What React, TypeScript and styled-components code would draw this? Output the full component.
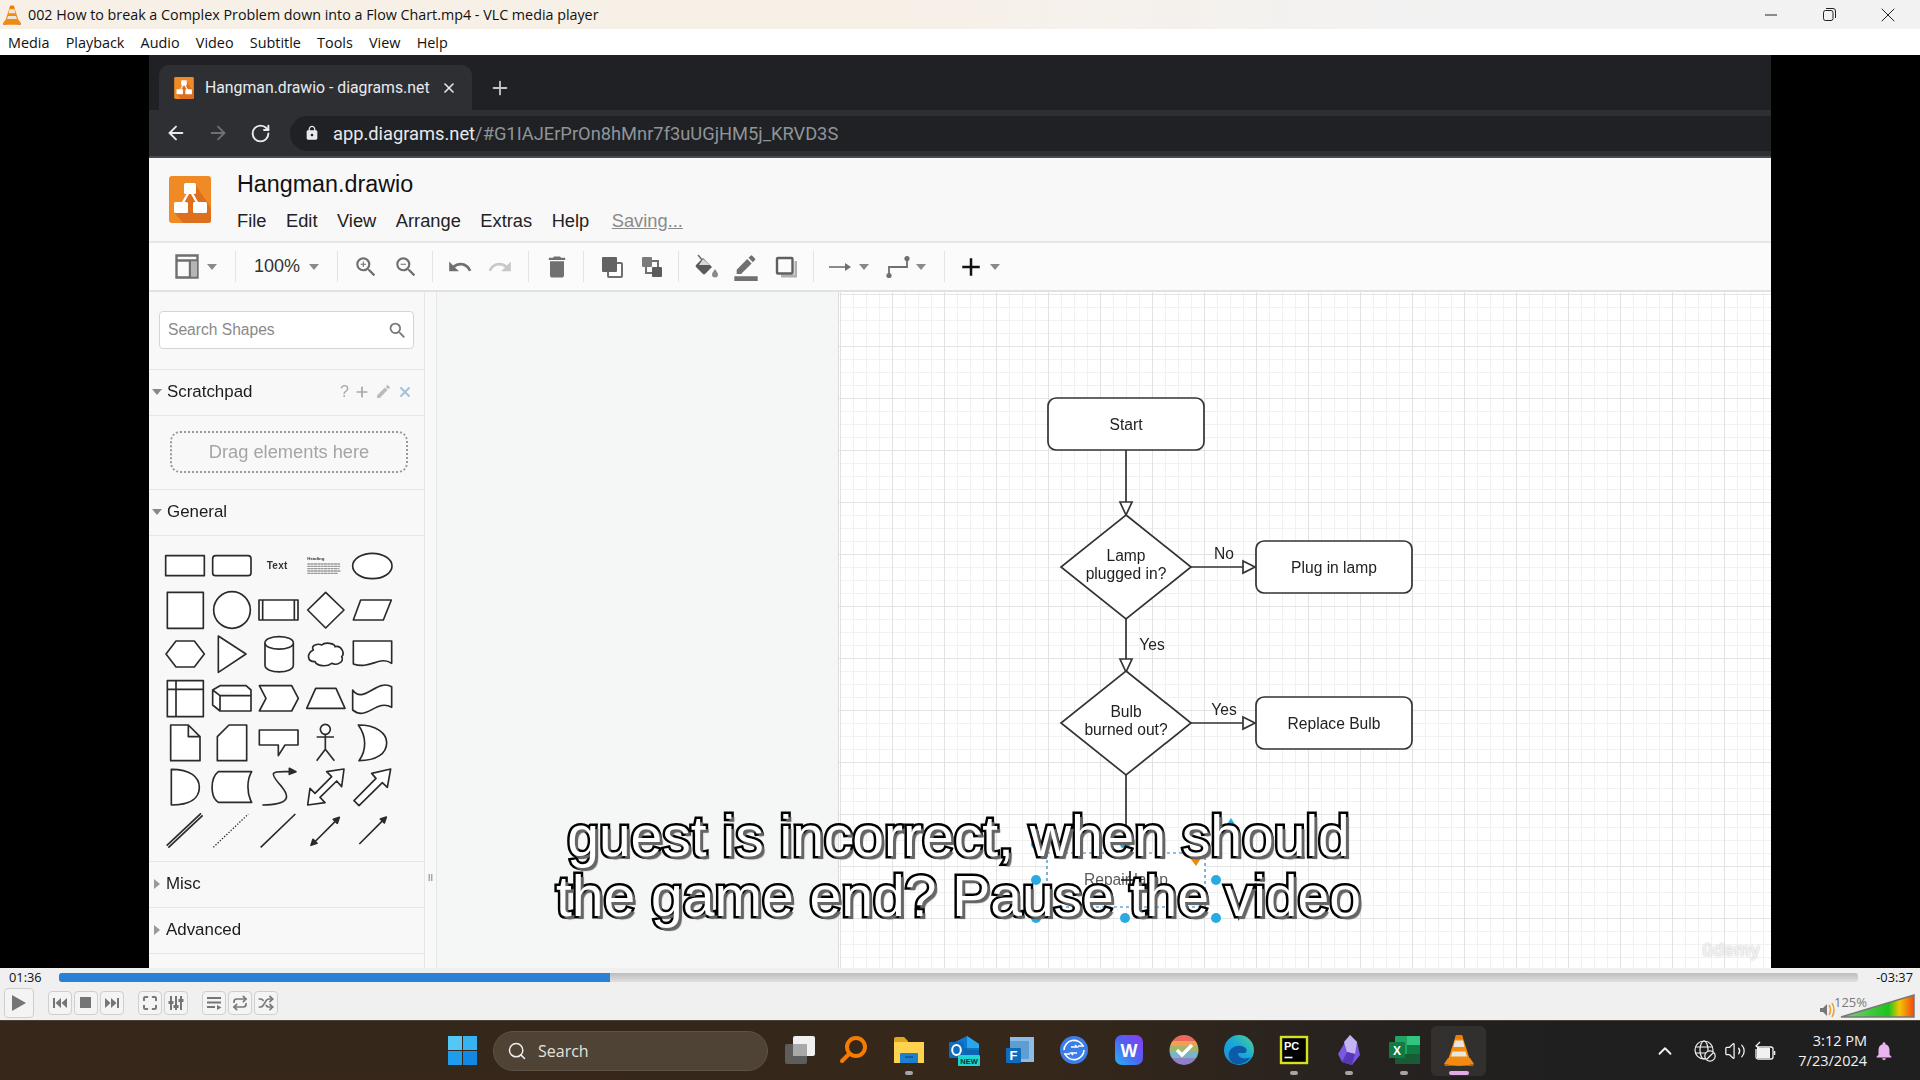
import React from "react";
import styled, { createGlobalStyle } from "styled-components";
import {
  ArrowLeft,
  ArrowRight,
  ChevronUp,
  Maximize,
  Plus,
  Repeat,
  RotateCw,
  Search,
  Shuffle,
  Volume2,
  X,
} from "lucide-react";
import {
  MdAdd,
  MdBorderColor,
  MdDelete,
  MdEdit,
  MdLock,
  MdNotifications,
  MdRedo,
  MdSearch,
  MdUndo,
  MdZoomIn,
  MdZoomOut,
} from "react-icons/md";

const GlobalStyle = createGlobalStyle`
  html, body {
    margin: 0;
    width: 1920px;
    height: 1080px;
    overflow: hidden;
    background: #000;
  }
  * { box-sizing: border-box; }
`;

const UI_FONT = `"Open Sans", "Noto Sans", sans-serif`;
const HELV = `"Liberation Sans", Arial, sans-serif`;

const Screen = styled.div`
  width: 1920px;
  height: 1080px;
  display: flex;
  flex-direction: column;
  font-family: ${UI_FONT};
`;

/* vlc window chrome */
const TitleBar = styled.div`
  height: 29px;
  display: flex;
  align-items: center;
  padding: 0 3px 0 1px;
  background: linear-gradient(90deg, #f8f0e6 0%, #f7f0e7 45%, #f2f2f2 75%);
`;
const TitleText = styled.span`
  margin-left: 5px;
  font-size: 14.3px;
  color: #111;
  white-space: nowrap;
`;
const WindowButtons = styled.div`
  margin-left: auto;
  display: flex;
`;
const WindowButton = styled.div`
  width: 58.5px;
  height: 29px;
  display: flex;
  align-items: center;
  justify-content: center;
`;
const MenuBar = styled.div`
  height: 26px;
  display: flex;
  align-items: center;
  gap: 16.2px;
  padding-left: 8px;
  background: #fff;
  font-size: 14.4px;
  color: #111;
`;

const Player = styled.div`
  height: 913px;
  background: #000;
  display: flex;
  justify-content: center;
  position: relative;
`;
const VideoFrame = styled.div`
  width: 1622px;
  height: 913px;
  display: flex;
  flex-direction: column;
  filter: blur(0.55px);
  overflow: hidden;
`;

/* browser inside the video */
const TabStrip = styled.div`
  height: 55px;
  padding: 10px 0 0 10px;
  background: #202124;
  display: flex;
  align-items: flex-end;
  color: #e8eaed;
  font-family: Roboto, sans-serif;
`;
const Tab = styled.div`
  width: 313px;
  height: 45px;
  background: #2e2f33;
  border-radius: 10px 10px 0 0;
  display: flex;
  align-items: center;
  padding-left: 14px;
  font-size: 15.8px;
`;
const TabTitle = styled.span`
  margin-left: 10px;
  width: 236px;
  white-space: nowrap;
`;
const NewTab = styled.div`
  margin-left: 17px;
  height: 45px;
  display: flex;
  align-items: center;
`;
const AddressBar = styled.div`
  height: 48px;
  background: #2e2f33;
  border-bottom: 2px solid #4a4b4e;
  display: flex;
  align-items: center;
  padding-left: 11px;
`;
const NavButton = styled.div`
  width: 42px;
  margin-left: ${(p: { $first?: boolean }) => (p.$first ? "-5px" : "0")};
  display: flex;
  justify-content: center;
`;
const Omnibox = styled.div`
  flex: 1;
  margin-left: 9px;
  height: 35px;
  background: #202124;
  border-radius: 18px 0 0 18px;
  display: flex;
  align-items: center;
  padding-left: 14px;
  font-family: Roboto, sans-serif;
  font-size: 18.3px;
  color: #e8eaed;
`;
const UrlHash = styled.span`
  color: #8f9499;
`;
const UrlText = styled.span`
  margin-left: 13px;
`;

/* draw.io */
const AppHeader = styled.div`
  height: 85px;
  background: #f8f8f8;
  border-bottom: 2px solid #e6e6e6;
  display: flex;
  padding: 13px 0 0 20px;
  font-family: ${HELV};
`;
const LogoWrap = styled.div`
  margin-top: 5px;
`;
const HeaderText = styled.div`
  margin-left: 26px;
  display: flex;
  flex-direction: column;
`;
const DocTitle = styled.div`
  font-size: 23.3px;
  line-height: 26px;
  color: #111;
`;
const DocMenu = styled.div`
  margin-top: 13px;
  display: flex;
  gap: 19.5px;
  font-size: 18.3px;
  line-height: 22px;
  color: #222;
`;
const Saving = styled.span`
  color: #8a8a8a;
  text-decoration: underline;
  margin-left: 3px;
`;
const Toolbar = styled.div`
  height: 49px;
  background: #fbfbfb;
  border-bottom: 2px solid #e2e2e2;
  display: flex;
  align-items: center;
  padding-left: 26px;
  font-family: ${HELV};
`;
const Slot = styled.div<{ $w: number; $ml?: number }>`
  width: ${(p) => p.$w}px;
  margin-left: ${(p) => p.$ml ?? 0}px;
  flex: none;
  display: flex;
  align-items: center;
  justify-content: center;
  color: #707070;
`;
const ZoomValue = styled.span`
  padding-left: 4px;
  font-size: 18px;
  color: #333;
`;
const Sep = styled.div`
  width: 1px;
  height: 31px;
  background: #e4e4e4;
`;
const Caret = styled.span`
  width: 0;
  height: 0;
  border-left: 5px solid transparent;
  border-right: 5px solid transparent;
  border-top: 6px solid #8a8a8a;
`;

const Workspace = styled.div`
  flex: 1;
  min-height: 0;
  display: flex;
  font-family: ${HELV};
`;
const Sidebar = styled.div`
  width: 276px;
  background: #f8f8f8;
  border-right: 1px solid #e6e6e6;
  display: flex;
  flex-direction: column;
`;
const SearchRow = styled.div`
  height: 78px;
  padding: 19px 10px 0 10px;
  border-bottom: 1px solid #e6e6e6;
`;
const SearchBox = styled.div`
  height: 38px;
  background: #fff;
  border: 1px solid #d5d5d5;
  border-radius: 4px;
  display: flex;
  align-items: center;
  justify-content: space-between;
  padding: 0 5px 0 8px;
  font-size: 15.6px;
  color: #8a8a8a;
`;
const SectionHead = styled.div`
  height: 46px;
  border-bottom: 1px solid #e6e6e6;
  display: flex;
  align-items: center;
  padding: 0 0 2px 3px;
  font-size: 16.9px;
  color: #1c1c1c;
`;
const Chevron = styled.span<{ $open?: boolean }>`
  width: 0;
  height: 0;
  margin-right: 5px;
  ${(p) =>
    p.$open
      ? `border-left: 5px solid transparent; border-right: 5px solid transparent; border-top: 6px solid #888; `
      : `margin-left: 2px; margin-right: 6px; border-top: 5px solid transparent; border-bottom: 5px solid transparent; border-left: 6px solid #999;`}
`;
const HeadActions = styled.div`
  margin-left: auto;
  margin-right: 11px;
  display: flex;
  align-items: center;
  gap: 5px;
  color: #a8a8a8;
  font-size: 16px;
`;
const DropRow = styled.div`
  height: 74px;
  padding: 15px 16px 0 21px;
  border-bottom: 1px solid #e6e6e6;
`;
const DropZone = styled.div`
  height: 42px;
  border: 2.5px dotted #999;
  border-radius: 10px;
  display: flex;
  align-items: center;
  justify-content: center;
  font-size: 18.3px;
  color: #a5a5a5;
`;
const Palette = styled.svg`
  display: block;
  margin: 10px 0 5px 1px;
`;
const PaletteRule = styled.div`
  border-top: 1px solid #e6e6e6;
`;
const Splitter = styled.div`
  width: 12px;
  background: #f8f8f8;
  border-right: 1px solid #e6e6e6;
  display: flex;
  align-items: center;
  justify-content: center;
  padding-top: 495px;
  color: #9a9a9a;
  font-size: 9px;
  font-weight: 700;
`;
const CanvasGutter = styled.div`
  width: 401px;
  background: #f5f6f6;
`;
const Page = styled.div`
  flex: 1;
  position: relative;
  border-left: 1px solid #dcdcdc;
  background-color: #fff;
  background-image: linear-gradient(#e4e4e4 1px, transparent 1px),
    linear-gradient(90deg, #e2e2e2 1px, transparent 1px),
    linear-gradient(#f1f1f1 1px, transparent 1px),
    linear-gradient(90deg, #f1f1f1 1px, transparent 1px);
  background-size: 52px 52px, 52px 52px, 13px 13px, 13px 13px;
  background-position: 0 2px, 1px 0, 0 2px, 1px 0;
`;
const FlowChart = styled.svg`
  position: absolute;
  left: -1px;
  top: -2px;
`;
const Watermark = styled.div`
  position: absolute;
  right: 11px;
  bottom: 7px;
  font-size: 18px;
  font-weight: 700;
  color: #f0f0f0;
  text-shadow: 0 0 2px #bbb;
`;

const Subtitles = styled.div`
  position: absolute;
  left: 0;
  right: 3px;
  bottom: 42px;
  text-align: center;
  font-family: ${HELV};
  font-size: 57px;
  line-height: 60px;
  color: #fff;
  white-space: nowrap;
  -webkit-text-stroke: 5px #000;
  paint-order: stroke fill;
  text-shadow: 3px 3px 1px #666;
`;

/* vlc controls */
const Controls = styled.div`
  height: 52px;
  background: #f0f0f0;
  display: flex;
  flex-direction: column;
`;
const SeekRow = styled.div`
  height: 20px;
  display: flex;
  align-items: center;
  padding: 0 7px 2px 9px;
  font-size: 12.8px;
  color: #111;
`;
const TimeLabel = styled.span`
  width: 50px;
`;
const SeekTrack = styled.div`
  width: 1799px;
  height: 9px;
  margin-right: auto;
  background: linear-gradient(#bdbdbd, #dfdfdf);
  border-radius: 3px;
  overflow: hidden;
`;
const SeekFill = styled.div`
  height: 100%;
  background: #2a7fd6;
`;
const ButtonRow = styled.div`
  flex: 1;
  display: flex;
  align-items: flex-start;
  padding-left: 4px;
  position: relative;
`;
const CtlButton = styled.div<{ $big?: boolean; $ml?: number }>`
  width: ${(p) => (p.$big ? 30 : 24)}px;
  height: ${(p) => (p.$big ? 30 : 24)}px;
  margin-top: ${(p) => (p.$big ? 0 : 3)}px;
  margin-left: ${(p) => p.$ml ?? 2}px;
  background: #f4f4f4;
  border: 1px solid #cfcfcf;
  border-radius: 4px;
  display: flex;
  align-items: center;
  justify-content: center;
  color: #777;
`;
const VolumeBox = styled.div`
  position: absolute;
  right: 5px;
  top: 2px;
  width: 95px;
  height: 30px;
`;
const VolumeLabel = styled.span`
  position: absolute;
  left: 14px;
  top: 3px;
  font-size: 13px;
  color: #7a7a7a;
`;

/* windows taskbar */
const Taskbar = styled.div`
  height: 60px;
  background: linear-gradient(90deg, #36271a 0%, #35271a 55%, #262220 72%, #1f1f1f 82%);
  border-top: 1px solid #4a4238;
  display: flex;
  align-items: center;
  padding: 0 25px 0 448px;
  color: #fff;
`;
const TaskSearch = styled.div`
  width: 275px;
  height: 40px;
  margin-left: 16px;
  background: #4e4335;
  border: 1px solid #5d5244;
  border-radius: 20px;
  display: flex;
  align-items: center;
  gap: 11px;
  padding-left: 13px;
  font-size: 16px;
  color: #e6e2dc;
`;
const TaskIcons = styled.div`
  margin-left: 3px;
  display: flex;
`;
const TaskSlot = styled.div<{ $active?: boolean }>`
  width: 55px;
  height: 50px;
  padding-bottom: 2px;
  position: relative;
  display: flex;
  align-items: center;
  justify-content: center;
  border-radius: 6px;
  background: ${(p) => (p.$active ? "rgba(255,255,255,0.07)" : "transparent")};
`;
const RunDot = styled.span<{ $active?: boolean }>`
  position: absolute;
  bottom: 1px;
  left: 50%;
  transform: translateX(-50%);
  width: ${(p) => (p.$active ? 20 : 8)}px;
  height: 4px;
  border-radius: 2px;
  background: ${(p) => (p.$active ? "#e3a9e8" : "#a5a5a5")};
`;
const Tray = styled.div`
  margin-left: auto;
  display: flex;
  align-items: center;
  color: #f2f2f2;
`;
const TraySlot = styled.div<{ $w: number }>`
  width: ${(p) => p.$w}px;
  display: flex;
  justify-content: center;
`;
const Clock = styled.div`
  margin-left: 6px;
  width: 81px;
  text-align: right;
  font-size: 14.5px;
  line-height: 20px;
`;
const BellWrap = styled.div`
  margin-left: 6px;
  width: 22px;
  display: flex;
  justify-content: center;
  color: #eab4ef;
`;

const VlcCone = ({ size }: { size: number }) => (
  <svg width={size} height={size} viewBox="0 0 36 36">
    <path d="M15 3h6l8 25H7z" fill="#f58a0b" />
    <path d="M14 8.5h8l1.5 6.5h-11zM11.5 19.5h13l1.5 5H10z" fill="#e8e6e0" />
    <path d="M15 3h6l1 4h-8z" fill="#ef7d00" />
    <path d="M7 26h22l4 6q-15 4-30 0z" fill="#f28a12" />
    <path d="M3 32q15 4 30 0l-1 2H4z" fill="#c96405" />
  </svg>
);

const DrawioLogo = ({ w, h }: { w: number; h: number }) => (
  <svg width={w} height={h} viewBox="0 0 42 47">
    <rect width="42" height="47" rx="3" fill="#f08a24" />
    <path d="M26 8 42 32v12a3 3 0 0 1-3 3H14L5 36z" fill="#dd6f1f" />
    <path d="M21 14 12 30M21 14l9 16" stroke="#fff" strokeWidth="2.4" />
    <rect x="15" y="7" width="12" height="11" rx="1.5" fill="#fff" />
    <rect x="5" y="26" width="14" height="11" rx="1.5" fill="#fff" />
    <rect x="24" y="26" width="14" height="11" rx="1.5" fill="#fff" />
  </svg>
);

const G = "#6f6f6f";
const LayoutIcon = () => (
  <svg width="24" height="25" viewBox="0 0 24 25">
    <path d="M1.5 1.5h21v22h-21zM1.5 6.5h21M15 6.5v17" fill="none" stroke={G} strokeWidth="2.4" />
    <rect x="16" y="7.5" width="6" height="15" fill="#b5b5b5" />
  </svg>
);
const ToFrontTool = () => (
  <svg width="24" height="24" viewBox="0 0 24 24">
    <rect x="8" y="8" width="14" height="14" rx="1" fill="#fff" stroke={G} strokeWidth="2" />
    <rect x="2" y="2" width="15" height="15" rx="1" fill="#636363" />
  </svg>
);
const ToBackTool = () => (
  <svg width="24" height="24" viewBox="0 0 24 24">
    <rect x="6" y="6" width="12" height="12" fill="none" stroke={G} strokeWidth="2" />
    <rect x="2" y="2" width="10" height="10" rx="1" fill="#7a7a7a" />
    <rect x="12" y="12" width="10" height="10" rx="1" fill="#5c5c5c" />
  </svg>
);
const FillTool = () => (
  <svg width="26" height="26" viewBox="0 0 26 26">
    <path d="M5 1l5 6" stroke={G} strokeWidth="1.6" />
    <path d="M10 4l9 9-7 7a1.5 1.5 0 0 1-2 0l-7-7a1.5 1.5 0 0 1 0-2z" fill="#5a5a5a" />
    <path d="M6 11h11l-7-6z" fill="#d8d8d8" />
    <path d="M22 15c-2 3-3 4-3 5.5a3 3 0 0 0 6 0c0-1.5-1-2.5-3-5.5z" fill="#8a8a8a" />
  </svg>
);
const ArrowTool = () => (
  <svg width="24" height="12" viewBox="0 0 24 12">
    <path d="M1 6h17" stroke={G} strokeWidth="1.6" />
    <path d="M17 2l6 4-6 4z" fill={G} />
  </svg>
);
const WaypointTool = () => (
  <svg width="24" height="24" viewBox="0 0 24 24">
    <path d="M3 21v-9h18V3" fill="none" stroke={G} strokeWidth="1.8" />
    <circle cx="3" cy="20.5" r="2.6" fill={G} />
    <circle cx="21" cy="3.5" r="2.6" fill={G} />
  </svg>
);
const ShadowTool = () => (
  <svg width="22" height="22" viewBox="0 0 22 22">
    <path d="M6 20h15V5" fill="none" stroke="#b0b0b0" strokeWidth="3" />
    <rect x="2" y="2" width="15.5" height="15.5" rx="1" fill="none" stroke="#5f5f5f" strokeWidth="2.4" />
  </svg>
);

const PlayIcon = () => (
  <svg width="16" height="18" viewBox="0 0 16 18">
    <path d="M1 1v16l14-8z" fill="#757575" />
  </svg>
);
const TransportIcon = ({ kind }: { kind: "prev" | "next" | "stop" | "list" | "eq" }) => {
  if (kind === "stop") {
    return (
      <svg width="12" height="12" viewBox="0 0 12 12">
        <rect width="11" height="11" fill="#757575" />
      </svg>
    );
  }
  if (kind === "list") {
    return (
      <svg width="16" height="16" viewBox="0 0 16 16">
        <path d="M1 3h14M1 7.5h14M1 12h8" stroke="#757575" strokeWidth="2" />
        <path d="M11 10l4.5 2.5L11 15z" fill="#757575" />
      </svg>
    );
  }
  if (kind === "eq") {
    return (
      <svg width="16" height="16" viewBox="0 0 16 16">
        <path d="M3 1v14M8 1v14M13 1v14" stroke="#757575" strokeWidth="2" />
        <path d="M.5 6h5v3h-5zM5.5 10h5v3h-5zM10.5 4h5v3h-5z" fill="#757575" />
      </svg>
    );
  }
  const d =
    kind === "prev"
      ? "M1 3h2v10H1zM9 3v10L3.5 8zM15 3v10L9.5 8z"
      : "M15 3h-2v10h2zM7 3v10l5.5-5zM1 3v10l5.5-5z";
  return (
    <svg width="16" height="16" viewBox="0 0 16 16">
      <path d={d} fill="#757575" />
    </svg>
  );
};

const ShapePalette = () => (
  <Palette width="274" height="310" viewBox="0 -132 822 930">
    <g fill="#fff" stroke="#2b2b2b" strokeWidth="5" strokeLinejoin="round">
      <rect x="47" y="-103" width="116" height="60" />
      <rect x="188" y="-103" width="115" height="60" rx="9" />
      <ellipse cx="667" cy="-72" rx="59" ry="38" />

      <rect x="52" y="7" width="108" height="108" />
      <circle cx="246" cy="60" r="55" />
      <path d="M327 30h117v60H327zM338 30v60M433 30v60" />
      <path d="M473 60l54-53 55 53-55 54z" />
      <path d="M610 90l22-60h92l-24 60z" />

      <path d="M48 192l30-39h55l30 39-30 39H78z" />
      <path d="M205 138l83 54-83 55z" />
      <path d="M345 158c0-24 85-24 85 0v68c0 26-85 26-85 0z" />
      <path d="M345 158c0 26 85 26 85 0" />
      <path d="M490 180c-10-15 15-20 25-15 10-10 40-5 40 5 20-5 30 20 20 30 10 15-15 28-30 20-15 12-45 8-50-5-25 0-25-25-5-35z" />
      <path d="M610 153h115v67c-35-25-65 20-115 2z" />

      <path d="M52 272h108v108H52zM78 272v108M52 298h108" />
      <path d="M188 300l22 -13h78l15 13v63H210l-22-18zM188 300l22 17h93M210 317v46" />
      <path d="M328 287h97l20 38-20 38h-97l20-38z" />
      <path d="M470 355l27-60h61l27 60z" />
      <path d="M608 300c32 45 72-35 117-10v62c-45-27-75 43-117 8z" />

      <path d="M62 405h53l35 35v72H62zM115 405v35h35" />
      <path d="M202 440l35-35h53v107h-88z" />
      <path d="M328 420h116v45h-39l-20 32v-32h-57z" />
      <circle cx="526" cy="418" r="15" />
      <path d="M526 433v45M500 441h52M526 478l-26 34M526 478l27 34" fill="none" />
      <path d="M625 405c55 0 85 25 85 53 0 32-30 54-83 54 23-32 23-72-2-107z" />

      <path d="M64 538c56 0 84 22 84 54 0 33-28 53-84 53z" />
      <path d="M205 545h100c-15 25-15 65 0 92H205c-25-17-25-72 0-92z" />
      <path d="M337 645c83 0 83-25 58-55-45-50-25-45 25-45" fill="none" />
      <path d="M418 535l20 10-20 8z" fill="#2b2b2b" />
      <path d="M473 645l7-50 15 15 50-50-15-15 52-8-7 53-15-17-50 49 15 16z" />
      <path d="M612 632l66-67-13-15 57-13-10 55-15-14-70 69z" />

      <g fill="none">
        <path d="M50 767l103-97M55 773l103-97" />
        <path d="M190 772l105-100" strokeDasharray="4 5" strokeWidth="4" />
        <path d="M332 772l104-100" />
        <path d="M488 762l76-76M628 762l76-76" />
      </g>
      <path d="M483 766l6-18 12 12zM568 682l-6 18-12-12zM709 681l-6 18-12-12z" fill="#2b2b2b" />
    </g>
    <text x="350" y="-62" fontSize="30" fontWeight="700" fill="#333" fontFamily={HELV} textLength="62">
      Text
    </text>
    <text x="472" y="-90" fontSize="13" fontWeight="700" fill="#333" fontFamily={HELV}>
      Heading
    </text>
    <path d="M472-78h98M472-71h100M472-64h96M472-57h100M472-50h92" stroke="#999" strokeWidth="4" strokeDasharray="9 1" />
  </Palette>
);

const FlowText = styled.text`
  font-family: ${HELV};
  font-size: 15.6px;
  fill: #222;
  text-anchor: middle;
`;

/* coordinates here are the ones on screen, the viewBox shifts them into the page */
const Flow = () => (
  <FlowChart width="933" height="678" viewBox="838 290 933 678">
    <g fill="#fff" stroke="#333" strokeWidth="1.7">
      <path d="M1126 450v53M1126 619v53M1126 775v78" fill="none" />
      <path d="M1191 567h52M1191 723h52" fill="none" />
      <path d="M1120 502h12l-6 13z" />
      <path d="M1120 659h12l-6 13z" />
      <path d="M1243 561l12 6-12 6z" />
      <path d="M1243 717l12 6-12 6z" />
      <rect x="1048" y="398" width="156" height="52" rx="8" />
      <rect x="1256" y="541" width="156" height="52" rx="8" />
      <rect x="1256" y="697" width="156" height="52" rx="8" />
      <path d="M1126 515l65 52-65 52-65-52z" />
      <path d="M1126 671l65 52-65 52-65-52z" />
    </g>
    <FlowText x="1126" y="430">Start</FlowText>
    <FlowText x="1126" y="561">Lamp</FlowText>
    <FlowText x="1126" y="579">plugged in?</FlowText>
    <FlowText x="1334" y="573">Plug in lamp</FlowText>
    <FlowText x="1224" y="559">No</FlowText>
    <FlowText x="1152" y="650">Yes</FlowText>
    <FlowText x="1126" y="717">Bulb</FlowText>
    <FlowText x="1126" y="735">burned out?</FlowText>
    <FlowText x="1224" y="715">Yes</FlowText>
    <FlowText x="1334" y="729">Replace Bulb</FlowText>

    <rect x="1047" y="853" width="158" height="54" fill="#fff" stroke="#2b7fc4" strokeWidth="1.2" strokeDasharray="3 3" />
    <FlowText x="1126" y="885" opacity="0.75">Repair lamp</FlowText>
    <path d="M1130 871v18M1121 880h18" stroke="#111" strokeWidth="1.6" />
    <g fill="#29abe2">
      <circle cx="1036" cy="880" r="5" />
      <circle cx="1216" cy="880" r="5" />
      <circle cx="1036" cy="918" r="5" />
      <circle cx="1125" cy="918" r="5" />
      <circle cx="1216" cy="918" r="5" />
      <circle cx="1036" cy="844" r="5" />
      <circle cx="1216" cy="844" r="5" />
      <circle cx="1125" cy="844" r="5" />
      <path d="M1226 826l5-8 5 8z" />
    </g>
    <path d="M1190 858h11l-5 8z" fill="#f08705" />
  </FlowChart>
);

const TaskView = () => (
  <svg width="36" height="36" viewBox="0 0 36 36">
    <rect x="4" y="12" width="22" height="20" rx="2" fill="#5d5d5d" />
    <rect x="12" y="4" width="22" height="20" rx="2" fill="#f0f0f0" />
    <rect x="12" y="12" width="14" height="12" fill="#a8a8a8" />
  </svg>
);
const OrangeSearch = () => (
  <svg width="36" height="36" viewBox="0 0 36 36">
    <circle cx="20" cy="15" r="9" fill="none" stroke="#f57c00" strokeWidth="4" />
    <path d="M13 22l-7 7" stroke="#f57c00" strokeWidth="4" strokeLinecap="round" />
  </svg>
);
const FolderIcon = () => (
  <svg width="36" height="36" viewBox="0 0 36 36">
    <path d="M3 7a2 2 0 0 1 2-2h8l4 4v6H3z" fill="#e2a61e" />
    <path d="M3 10h30v21H3z" fill="#ffd24f" />
    <path d="M9 22a1 1 0 0 1 1-1h16a1 1 0 0 1 1 1v9H9z" fill="#1c7fcf" />
    <path d="M14 25h8" stroke="#0c4f8c" strokeWidth="1.4" />
  </svg>
);
const OutlookIcon = () => (
  <svg width="36" height="36" viewBox="0 0 36 36">
    <path d="M9 10l12-6 12 8v14H9z" fill="#0f78d4" />
    <path d="M21 4l12 8v6H21z" fill="#28a8ea" />
    <path d="M9 16h24v10H9z" fill="#0a5ea8" opacity="0.7" />
    <rect x="3" y="10" width="15" height="16" rx="1" fill="#0f6cbd" />
    <ellipse cx="10.5" cy="18" rx="4.3" ry="5" fill="none" stroke="#fff" strokeWidth="2" />
    <rect x="12" y="23" width="22" height="11" rx="1" fill="#1fd6d3" />
    <text x="23" y="31.5" fontSize="7.5" fontWeight="700" textAnchor="middle" fontFamily={HELV} fill="#06323a">
      NEW
    </text>
  </svg>
);
const FormsIcon = () => (
  <svg width="36" height="36" viewBox="0 0 36 36">
    <rect x="9" y="5" width="24" height="25" fill="#8dbde4" />
    <rect x="9" y="9" width="19" height="18" fill="#5f9ed2" />
    <rect x="5" y="16" width="15" height="15" rx="1" fill="#0f6cbd" />
    <text x="12.5" y="28" fontSize="13" fontWeight="700" textAnchor="middle" fontFamily={HELV} fill="#fff">
      F
    </text>
  </svg>
);
const SyncIcon = () => (
  <svg width="36" height="36" viewBox="0 0 36 36">
    <circle cx="18" cy="18" r="14" fill="#3d7de8" />
    <path d="M8 18a10 10 0 0 1 19-4M28 18a10 10 0 0 1-19 4" fill="none" stroke="#fff" strokeWidth="1.6" />
    <path d="M22 14h6M14 22H8M15 15h6l-2-2M21 21h-6l2 2" fill="none" stroke="#fff" strokeWidth="1.6" />
  </svg>
);
const WebflowIcon = () => (
  <svg width="36" height="36" viewBox="0 0 36 36">
    <defs>
      <linearGradient id="wf" x1="0" y1="1" x2="1" y2="0">
        <stop offset="0" stopColor="#22b5f5" />
        <stop offset="0.5" stopColor="#4f63f2" />
        <stop offset="1" stopColor="#8b3bf0" />
      </linearGradient>
    </defs>
    <rect x="4" y="3" width="28" height="30" rx="7" fill="url(#wf)" />
    <text x="18" y="24.5" fontSize="18" fontWeight="700" textAnchor="middle" fontFamily={HELV} fill="#fff">
      W
    </text>
  </svg>
);
const RainbowCheck = () => (
  <svg width="36" height="36" viewBox="0 0 36 36">
    <defs>
      <clipPath id="rb">
        <ellipse cx="18" cy="18" rx="14.5" ry="15" />
      </clipPath>
    </defs>
    <g clipPath="url(#rb)">
      <rect y="3" width="36" height="6" fill="#e96a5d" />
      <rect y="9" width="36" height="5" fill="#f0a050" />
      <rect y="14" width="36" height="6" fill="#a5b56b" />
      <rect y="20" width="36" height="6" fill="#7ab5c4" />
      <rect y="26" width="36" height="7" fill="#8f80c8" />
    </g>
    <path d="M11 18l5 5 10-10" fill="none" stroke="#fff" strokeWidth="3.4" />
  </svg>
);
const EdgeIcon = () => (
  <svg width="36" height="36" viewBox="0 0 36 36">
    <defs>
      <linearGradient id="eg" x1="0" y1="1" x2="1" y2="0">
        <stop offset="0" stopColor="#1690d8" />
        <stop offset="0.55" stopColor="#1ba9d6" />
        <stop offset="1" stopColor="#4fd68a" />
      </linearGradient>
    </defs>
    <circle cx="18" cy="18" r="15" fill="url(#eg)" />
    <path d="M8 26C6 17 14 13 20 14c6 1 7 5 4 7h-7c0 5 6 7 13 4-4 6-12 9-18 6-2-1-3-3-4-5z" fill="#0d5aa8" />
  </svg>
);
const PyCharmIcon = () => (
  <svg width="36" height="36" viewBox="0 0 36 36">
    <rect x="5" y="5" width="26" height="26" fill="#000" stroke="#d8e021" strokeWidth="2.4" />
    <text x="8" y="18" fontSize="11" fontWeight="700" fontFamily={HELV} fill="#fff">
      PC
    </text>
    <path d="M8.5 25.5h8" stroke="#fff" strokeWidth="1.6" />
  </svg>
);
const ObsidianIcon = () => (
  <svg width="36" height="36" viewBox="0 0 36 36">
    <path d="M19 3l7 7 3 13-8 10-10-3-4-8 6-10z" fill="#7c57e0" />
    <path d="M19 3l7 7-2 12-8-2-3-10z" fill="#c5b3f2" />
    <path d="M16 20l8 2-3 11-10-3z" fill="#5a36b8" />
  </svg>
);
const ExcelIcon = () => (
  <svg width="36" height="36" viewBox="0 0 36 36">
    <rect x="9" y="4" width="25" height="28" rx="1" fill="#21a366" />
    <rect x="21" y="4" width="13" height="9" fill="#33c481" />
    <rect x="21" y="13" width="13" height="9" fill="#107c41" />
    <rect x="9" y="22" width="25" height="10" fill="#185c37" />
    <rect x="3" y="10" width="16" height="16" rx="1" fill="#107c41" />
    <text x="11" y="23" fontSize="12" fontWeight="700" textAnchor="middle" fontFamily={HELV} fill="#fff">
      X
    </text>
  </svg>
);

const GlobeBlocked = () => (
  <svg width="22" height="22" viewBox="0 0 22 22" fill="none" stroke="#f2f2f2" strokeWidth="1.2">
    <circle cx="10" cy="10" r="9" />
    <ellipse cx="10" cy="10" rx="4" ry="9" />
    <path d="M1.5 7h17M1.5 13h17" />
    <circle cx="16" cy="16" r="5.2" fill="#1f1f1f" />
    <path d="M12.5 19.5l7-7" />
  </svg>
);
const BatteryIcon = () => (
  <svg width="22" height="20" viewBox="0 0 22 20">
    <path d="M3 6h14a2 2 0 0 1 2 2v8a2 2 0 0 1-2 2H4a2 2 0 0 1-2-2V8" fill="none" stroke="#f2f2f2" strokeWidth="1.3" />
    <path d="M3 7h13v10H3z" fill="#f2f2f2" />
    <path d="M20.5 10v4" stroke="#f2f2f2" strokeWidth="1.6" />
    <path d="M6 1L2 5l4 3" fill="none" stroke="#f2f2f2" strokeWidth="1.3" />
  </svg>
);

const App = () => {
  const taskApps = [
    { icon: <TaskView /> },
    { icon: <OrangeSearch /> },
    { icon: <FolderIcon />, running: true },
    { icon: <OutlookIcon /> },
    { icon: <FormsIcon /> },
    { icon: <SyncIcon /> },
    { icon: <WebflowIcon /> },
    { icon: <RainbowCheck /> },
    { icon: <EdgeIcon /> },
    { icon: <PyCharmIcon />, running: true },
    { icon: <ObsidianIcon />, running: true },
    { icon: <ExcelIcon />, running: true },
    { icon: <VlcCone size={36} />, running: true, active: true },
  ];

  return (
    <Screen>
      <GlobalStyle />
      <TitleBar>
        <VlcCone size={22} />
        <TitleText>002 How to break a Complex Problem down into a Flow Chart.mp4 - VLC media player</TitleText>
        <WindowButtons>
          <WindowButton>
            <svg width="12" height="12" viewBox="0 0 12 12">
              <path d="M0 6h12" stroke="#222" strokeWidth="1" />
            </svg>
          </WindowButton>
          <WindowButton>
            <svg width="13" height="13" viewBox="0 0 13 13">
              <rect x="0.5" y="2.5" width="9.5" height="10" rx="2" fill="none" stroke="#222" />
              <path d="M3 .5h7a2.5 2.5 0 0 1 2.5 2.5v7" fill="none" stroke="#222" />
            </svg>
          </WindowButton>
          <WindowButton>
            <X size={24} strokeWidth={1} color="#222" />
          </WindowButton>
        </WindowButtons>
      </TitleBar>
      <MenuBar>
        <span>Media</span>
        <span>Playback</span>
        <span>Audio</span>
        <span>Video</span>
        <span>Subtitle</span>
        <span>Tools</span>
        <span>View</span>
        <span>Help</span>
      </MenuBar>

      <Player>
        <VideoFrame>
          <TabStrip>
            <Tab>
              <DrawioLogo w={22} h={22} />
              <TabTitle>Hangman.drawio - diagrams.net</TabTitle>
              <X size={16} strokeWidth={2.4} color="#e8eaed" />
            </Tab>
            <NewTab>
              <Plus size={22} strokeWidth={2} color="#c4c7c9" />
            </NewTab>
          </TabStrip>
          <AddressBar>
            <NavButton $first>
              <ArrowLeft size={22} strokeWidth={2} color="#e8eaed" />
            </NavButton>
            <NavButton>
              <ArrowRight size={22} strokeWidth={2} color="#6d7074" />
            </NavButton>
            <NavButton>
              <RotateCw size={21} strokeWidth={2.2} color="#e8eaed" />
            </NavButton>
            <Omnibox>
              <MdLock size={16} color="#e8eaed" />
              <UrlText>
                app.diagrams.net<UrlHash>/#G1IAJErPrOn8hMnr7f3uUGjHM5j_KRVD3S</UrlHash>
              </UrlText>
            </Omnibox>
          </AddressBar>

          <AppHeader>
            <LogoWrap>
              <DrawioLogo w={42} h={47} />
            </LogoWrap>
            <HeaderText>
              <DocTitle>Hangman.drawio</DocTitle>
              <DocMenu>
                <span>File</span>
                <span>Edit</span>
                <span>View</span>
                <span>Arrange</span>
                <span>Extras</span>
                <span>Help</span>
                <Saving>Saving...</Saving>
              </DocMenu>
            </HeaderText>
          </AppHeader>

          <Toolbar>
            <Slot $w={24}><LayoutIcon /></Slot>
            <Slot $w={26}><Caret /></Slot>
            <Slot $w={20}><Sep /></Slot>
            <Slot $w={60}><ZoomValue>100%</ZoomValue></Slot>
            <Slot $w={18}><Caret /></Slot>
            <Slot $w={28}><Sep /></Slot>
            <Slot $w={30}><MdZoomIn size={26} /></Slot>
            <Slot $w={50}><MdZoomOut size={26} /></Slot>
            <Slot $w={2}><Sep /></Slot>
            <Slot $w={54}><MdUndo size={26} /></Slot>
            <Slot $w={26}><MdRedo size={26} color="#c8c8c8" /></Slot>
            <Slot $w={30}><Sep /></Slot>
            <Slot $w={28}><MdDelete size={30} /></Slot>
            <Slot $w={24}><Sep /></Slot>
            <Slot $w={34}><ToFrontTool /></Slot>
            <Slot $w={46}><ToBackTool /></Slot>
            <Slot $w={6}><Sep /></Slot>
            <Slot $w={40} $ml={5}><FillTool /></Slot>
            <Slot $w={40}><MdBorderColor size={28} /></Slot>
            <Slot $w={40}><ShadowTool /></Slot>
            <Slot $w={14}><Sep /></Slot>
            <Slot $w={36} $ml={2}><ArrowTool /></Slot>
            <Slot $w={12}><Caret /></Slot>
            <Slot $w={38} $ml={9}><WaypointTool /></Slot>
            <Slot $w={8}><Caret /></Slot>
            <Slot $w={38}><Sep /></Slot>
            <Slot $w={16}><MdAdd size={30} color="#111" style={{ flex: "none" }} /></Slot>
            <Slot $w={8} $ml={12}><Caret /></Slot>
          </Toolbar>

          <Workspace>
            <Sidebar>
              <SearchRow>
                <SearchBox>
                  Search Shapes
                  <MdSearch size={21} color="#777" />
                </SearchBox>
              </SearchRow>
              <SectionHead>
                <Chevron $open />
                Scratchpad
                <HeadActions>
                  ?
                  <Plus size={16} strokeWidth={2.6} />
                  <MdEdit size={17} color="#bbb" />
                  <X size={16} strokeWidth={3} color="#a7c3da" />
                </HeadActions>
              </SectionHead>
              <DropRow>
                <DropZone>Drag elements here</DropZone>
              </DropRow>
              <SectionHead>
                <Chevron $open />
                General
              </SectionHead>
              <ShapePalette />
              <PaletteRule />
              <SectionHead>
                <Chevron />
                Misc
              </SectionHead>
              <SectionHead>
                <Chevron />
                Advanced
              </SectionHead>
            </Sidebar>
            <Splitter>ll</Splitter>
            <CanvasGutter />
            <Page>
              <Flow />
              <Watermark>ûdemy</Watermark>
            </Page>
          </Workspace>
        </VideoFrame>
        <Subtitles>
          guest is incorrect, when should
          <br />
          the game end? Pause the video
        </Subtitles>
      </Player>

      <Controls>
        <SeekRow>
          <TimeLabel>01:36</TimeLabel>
          <SeekTrack>
            <SeekFill style={{ width: `${((610 - 59) / 1799) * 100}%` }} />
          </SeekTrack>
          <span>-03:37</span>
        </SeekRow>
        <ButtonRow>
          <CtlButton $big $ml={0}><PlayIcon /></CtlButton>
          <CtlButton $ml={14}><TransportIcon kind="prev" /></CtlButton>
          <CtlButton><TransportIcon kind="stop" /></CtlButton>
          <CtlButton><TransportIcon kind="next" /></CtlButton>
          <CtlButton $ml={14}><Maximize size={16} strokeWidth={3} /></CtlButton>
          <CtlButton><TransportIcon kind="eq" /></CtlButton>
          <CtlButton $ml={14}><TransportIcon kind="list" /></CtlButton>
          <CtlButton><Repeat size={16} strokeWidth={2.6} /></CtlButton>
          <CtlButton><Shuffle size={16} strokeWidth={2.6} /></CtlButton>
          <VolumeBox>
            <VolumeLabel>125%</VolumeLabel>
            <svg width="95" height="30" viewBox="0 0 95 30">
              <defs>
                <linearGradient id="vol" x1="0" y1="0" x2="1" y2="0">
                  <stop offset="0" stopColor="#7ed07a" />
                  <stop offset="0.65" stopColor="#1cc41c" />
                  <stop offset="0.8" stopColor="#f5c400" />
                  <stop offset="1" stopColor="#f04a10" />
                </linearGradient>
              </defs>
              <path d="M21 27L94 5v22z" fill="url(#vol)" stroke="#777" strokeWidth="1.5" />
              <path d="M0 18h3l4-4v12l-4-4H0z" fill="#777" />
              <path d="M9 15q3 5 0 10M12 13q4 7 0 14" fill="none" stroke="#f09a2a" strokeWidth="1.5" />
            </svg>
          </VolumeBox>
        </ButtonRow>
      </Controls>

      <Taskbar>
        <svg width="29" height="29" viewBox="0 0 29 29">
          <path d="M0 0h14v14H0z" fill="#53c7f5" />
          <path d="M15 0h14v14H15z" fill="#37b3ef" />
          <path d="M0 15h14v14H0z" fill="#1f9ded" />
          <path d="M15 15h14v14H15z" fill="#1288e3" />
        </svg>
        <TaskSearch>
          <Search size={20} strokeWidth={1.8} color="#eee" />
          Search
        </TaskSearch>
        <TaskIcons>
          {taskApps.map((app, i) => (
            <TaskSlot key={i} $active={app.active}>
              {app.icon}
              {app.running && <RunDot $active={app.active} />}
            </TaskSlot>
          ))}
        </TaskIcons>
        <Tray>
          <TraySlot $w={30}><ChevronUp size={22} strokeWidth={2} /></TraySlot>
          <TraySlot $w={10} />
          <TraySlot $w={30}><GlobeBlocked /></TraySlot>
          <TraySlot $w={30}><Volume2 size={22} strokeWidth={1.4} /></TraySlot>
          <TraySlot $w={30}><BatteryIcon /></TraySlot>
          <Clock>
            3:12 PM
            <br />
            7/23/2024
          </Clock>
          <BellWrap><MdNotifications size={24} /></BellWrap>
        </Tray>
      </Taskbar>
    </Screen>
  );
};

export default App;
